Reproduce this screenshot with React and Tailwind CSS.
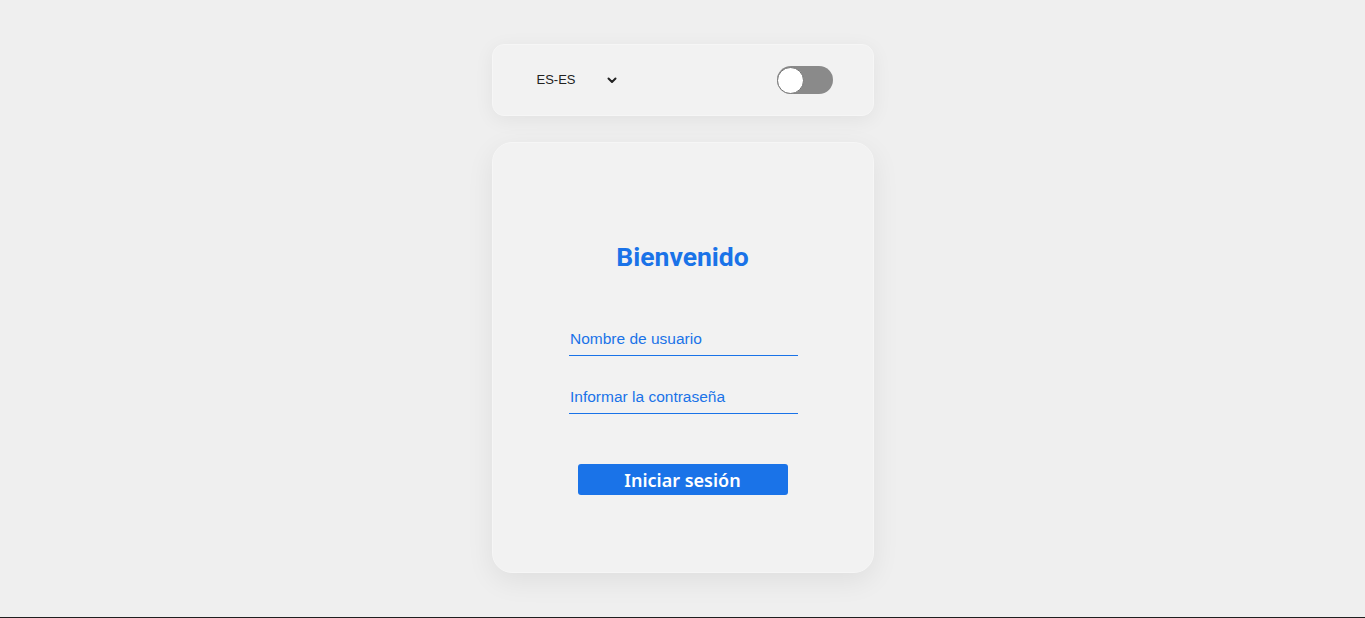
import { useState } from 'react'

export default function App() {
  const [dark, setDark] = useState(false)

  return (
    <div className="h-[618px] bg-[#efefef] border-b border-[#1f1f1f] flex flex-col items-center pt-[44px]" style={{ fontFamily: '"Liberation Sans", Arial, sans-serif' }}>
      {/* Top bar: language + theme toggle */}
      <div className="w-[382px] h-[72px] rounded-[12px] bg-[#f2f2f2] border border-[#f6f6f6] shadow-[0_4px_20px_rgba(0,0,0,0.06)] flex items-center justify-between pl-[44px] pr-[40px]">
        <div className="flex items-center gap-[31px] text-[13px] text-[#222]">
          <span>ES-ES</span>
          <svg width="10" height="7" viewBox="0 0 10 7" className="mt-[1px]">
            <path d="M1.5 1.5 L5 5 L8.5 1.5" fill="none" stroke="#222" strokeWidth="2" strokeLinecap="round" strokeLinejoin="round" />
          </svg>
        </div>
        <button
          onClick={() => setDark(!dark)}
          className="w-[56px] h-[28px] rounded-full bg-[#8a8a8a] flex items-center"
        >
          <span className="w-[27px] h-[27px] rounded-full bg-white border border-[#777] block" />
        </button>
      </div>

      {/* Login card */}
      <div className="mt-[26px] w-[382px] h-[431px] rounded-[20px] bg-[#f2f2f2] border border-[#f6f6f6] shadow-[0_8px_28px_rgba(0,0,0,0.07)] flex flex-col items-center pt-[98px]">
        <h1 className="text-[26.5px] font-bold text-[#1a73e8] leading-[32px]" style={{ fontFamily: 'Roboto, sans-serif' }}>
          Bienvenido
        </h1>

        <div className="mt-[54px] ml-[2px] w-[229px] flex flex-col gap-[29px]">
          <input
            placeholder="Nombre de usuario"
            className="w-full h-[29px] bg-transparent border-b border-[#1a73e8] px-[1px] pb-[4px] text-[15.5px] text-[#1a73e8] placeholder:text-[#1a73e8] outline-none"
          />
          <input
            type="password"
            placeholder="Informar la contraseña"
            className="w-full h-[29px] bg-transparent border-b border-[#1a73e8] px-[1px] pb-[4px] text-[15.5px] text-[#1a73e8] placeholder:text-[#1a73e8] outline-none"
          />
        </div>

        <button
          className="mt-[50px] w-[210px] h-[31px] rounded-[3px] bg-[#1a73e8] text-white text-[18px] font-semibold leading-none"
          style={{ fontFamily: '"Noto Sans", sans-serif' }}
        >
          Iniciar sesión
        </button>
      </div>
    </div>
  )
}
